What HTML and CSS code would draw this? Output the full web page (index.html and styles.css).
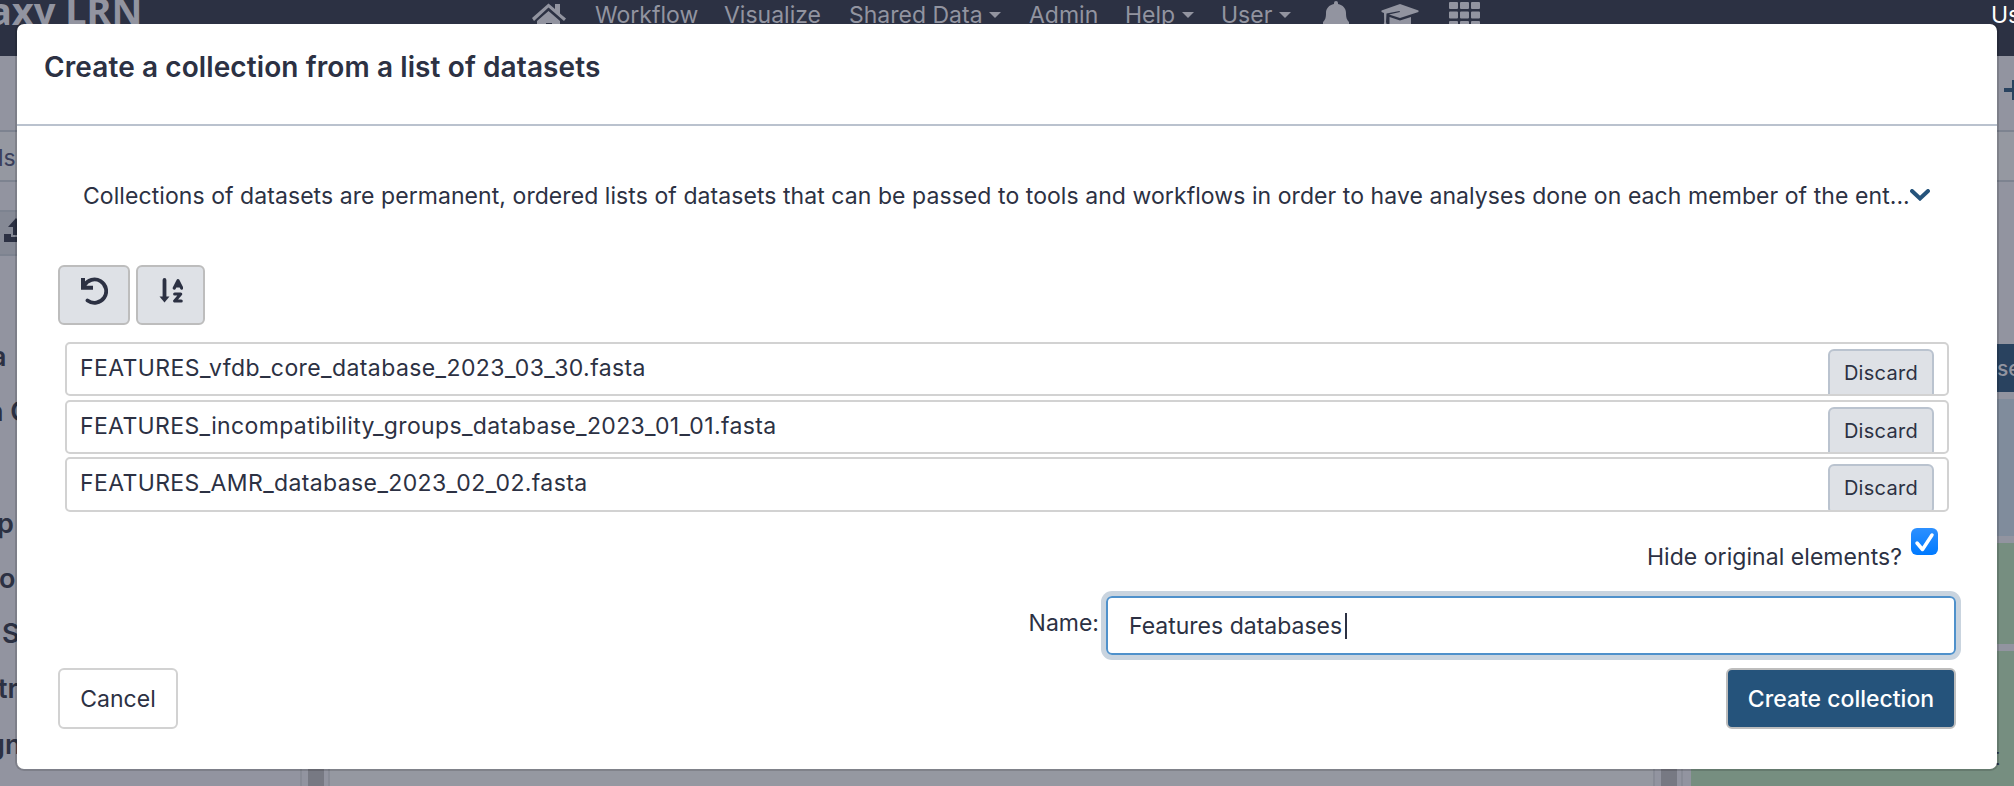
FILE: index.html
```html
<!DOCTYPE html>
<html lang="en">
<head>
<meta charset="utf-8">
<title>Create a collection</title>
<link rel="stylesheet" href="styles.css">
</head>
<body>
<div class="page">
  <nav class="masthead">
    <span class="brand">axy LRN</span>
    <div class="menu">
      <svg class="i-home" viewBox="0 0 36 30"><path d="M1 16 17.500 1.500 24 7V2h5v9.500l6 5-2 2.500L17.500 5.500 3 19z"/><path d="M6 19 17.500 9 29 19v10h-8v-8h-6v8H6z"/></svg>
      <span class="m-work">Workflow</span>
      <span class="m-vis">Visualize</span>
      <span class="m-shared">Shared Data <i class="caret"></i></span>
      <span class="m-admin">Admin</span>
      <span class="m-help">Help <i class="caret"></i></span>
      <span class="m-user">User <i class="caret"></i></span>
      <svg class="i-bell" viewBox="0 0 28 30"><path d="M14 0a2 2 0 0 1 2 2v1c5 1 8 4.500 8 9 0 5 1 7 3 9v3H1v-3c2-2 3-4 3-9 0-4.500 3-8 8-9V2a2 2 0 0 1 2-2z"/></svg>
      <svg class="i-cap" viewBox="0 0 38 26"><path d="M19 0 37.500 6.500v1.500L19 14 8 10.500 19 8 18.500 7 5.500 9.500 5 18l1.500 6H2l1.200-6L3 9 .5 8V6.500z"/><path d="M8.500 13 19 16.500 30 13v9H8.500z"/></svg>
      <svg class="i-grid" viewBox="0 0 31 27"><path d="M1 1h7v5H1zM12 1h7v5h-7zM23 1h7v5h-7zM1 10.500h7v5H1zM12 10.500h7v5h-7zM23 10.500h7v5h-7zM1 20h7v5H1zM12 20h7v5h-7zM23 20h7v5h-7z" stroke-width="2" stroke="currentColor" stroke-linejoin="round"/></svg>
    </div>
    <span class="using">Us</span>
  </nav>
  <div class="columns">
    <aside class="left">
      <div class="l-top"></div>
      <div class="l-search">ls</div>
      <div class="l-gap"></div>
      <div class="l-upload"><svg viewBox="0 0 24 24"><path d="M12 0 20 9H15v8H9V9H4zM0 16h7v3h10v-3h7v8H0z"/></svg></div>
      <ul class="sections">
        <li class="s1">a</li><li class="s2">n C</li><li class="s3">p</li><li class="s4">o</li><li class="s5">S</li><li class="s6">tra</li><li class="s7">gn</li>
      </ul>
    </aside>
    <div class="splitter"><i></i></div>
    <main class="center"></main>
    <div class="splitter"><i></i></div>
    <aside class="right">
      <div class="r-top"><svg viewBox="0 0 20 20"><path d="M8 0h4v8h8v4h-8v8H8v-8H0V8h8z"/></svg></div>
      <div class="r-search"></div>
      <div class="r-gap"></div>
      <div class="r-button">se</div>
      <div class="r-item blue"></div>
      <div class="r-item green"></div>
      <div class="r-item last"><span>t</span></div>
    </aside>
  </div>
</div>
<section class="modal">
  <header class="modal-head"><h1>Create a collection from a list of datasets</h1></header>
  <div class="modal-body">
    <div class="help"><p>Collections of datasets are permanent, ordered lists of datasets that can be passed to tools and workflows in order to have analyses done on each member of the ent...</p>
      <svg viewBox="0 0 20 12"><path d="M2 2 10 9.500 18 2"/></svg></div>
    <div class="tools">
      <button class="reset"><svg viewBox="0 0 28 28"><path class="fill" d="M1 1h4v7.500l2 .2h6v4H1z"/><path class="line" d="M4.200 8.500A11.700 11.700 0 1 1 7.500 23.500"/></svg></button>
      <button class="sort"><svg viewBox="0 0 24 26"><path class="shaft" d="M5.500 2v18"/><path class="fill" d="M.5 18.500h10l-5 6z"/><path class="az" d="M15.300 10 19 2.700 22.700 10M16.500 8h5M15.700 16h6l-6 7h6.500"/></svg></button>
    </div>
    <ul class="list">
      <li><span class="n1">FEATURES_vfdb_core_database_2023_03_30.fasta</span><button>Discard</button></li>
      <li><span class="n2">FEATURES_incompatibility_groups_database_2023_01_01.fasta</span><button>Discard</button></li>
      <li><span class="n3">FEATURES_AMR_database_2023_02_02.fasta</span><button>Discard</button></li>
    </ul>
    <div class="hide"><span>Hide original elements?</span><i class="check"><svg viewBox="0 0 27 27"><path d="M6 15 11.500 21.500 21 7"/></svg></i></div>
    <div class="name"><span>Name:</span><div class="field"><span>Features databases</span><i class="cursor"></i></div></div>
    <footer class="actions"><button class="cancel">Cancel</button><button class="create">Create collection</button></footer>
  </div>
</section>
</body>
</html>
```

FILE: styles.css
```css
* { box-sizing: border-box; }
body { margin: 0; width: 2014px; height: 786px; overflow: hidden; font-family: Inter, "Liberation Sans", sans-serif; font-size: 23px; color: #2c3143; }
ul, p, h1 { margin: 0; padding: 0; list-style: none; font-weight: normal; }
span, p, h1, li { white-space: nowrap; }
button { font: inherit; color: inherit; padding: 0; margin: 0; }
svg { display: block; flex: none; }
.page { height: 786px; display: flex; flex-direction: column; background: #9294a0; }
.masthead { height: 56px; flex: none; background: #2c3143; color: #9294a0; fill: #9294a0; display: flex; align-items: flex-start; overflow: hidden; }
.brand { font-family: "Noto Sans", sans-serif; font-weight: 700; font-size: 38px; line-height: 40px; width: 541px; flex: none; margin-top: -10px; margin-left: -11px; }
.menu { display: flex; line-height: 30px; width: 1461px; flex: none; }
.menu span { flex: none; }
.caret { display: inline-block; border: 6px solid transparent; border-top-color: currentColor; border-bottom: 0; vertical-align: 5px; }
.i-home { width: 36px; height: 30px; margin: 2px 28px 0 1px; }
.m-work { width: 129px; } .m-vis { width: 125px; } .m-shared { width: 180px; } .m-admin { width: 96px; } .m-help { width: 96px; } .m-user { width: 101px; }
.i-bell { width: 28px; height: 30px; margin: 1px 31px 0 0; }
.i-cap { width: 38px; height: 26px; margin: 4px 30px 0 0; }
.i-grid { width: 31px; height: 27px; margin-top: 2px; }
.using { color: #fff; line-height: 30px; flex: none; }
.columns { flex: 1; display: flex; min-height: 0; }
.left { width: 300px; overflow: hidden; }
.l-top { height: 76px; border-bottom: 2px solid #7d8390; }
.l-search { height: 50px; background: #9598a1; border-bottom: 2px solid #7d8390; line-height: 53px; text-indent: -2px; color: #3a3f5c; }
.l-gap { height: 28px; }
.l-upload { height: 46px; background: #858995; border: solid #7d8390; border-width: 2px 0; padding: 6px 0 0 4px; }
.l-upload svg { width: 24px; height: 24px; fill: #2c3143; }
.sections { font-weight: 600; font-size: 27px; line-height: 34px; padding-top: 84px; }
.sections li { height: 55px; }
.s1 { margin-left: -9px; } .s2 { margin-left: -13px; } .sections .s2 { height: 112px; } .s3 { margin-left: -3px; } .s4 { margin-left: -1px; } .s5 { margin-left: 2px; } .sections .s6 { margin-left: -2px; height: 56px; } .s7 { margin-left: -12px; }
.splitter { width: 30px; border: solid #888b96; border-width: 0 2px; padding-left: 6px; }
.splitter i { display: block; width: 16px; height: 100%; background: #777983; }
.center { width: 1323px; background: #9598a1; }
.right { width: 331px; padding-left: 8px; }
.r-top { height: 76px; border-bottom: 2px solid #7d8390; padding: 24px 0 0 313px; }
.r-top svg { width: 20px; height: 20px; fill: #29425f; }
.r-search { height: 50px; background: #9598a1; border-bottom: 2px solid #7d8390; }
.r-gap { height: 162px; }
.r-button { height: 48px; margin-bottom: 7px; background: #29425f; color: #9294a0; font-weight: 500; font-size: 21px; line-height: 50px; padding-left: 306px; overflow: hidden; }
.r-item { background: #768e80; margin-bottom: 7px; height: 101px; }
.r-item.blue { height: 137px; background: #808c9c; }
.r-item.last { height: 135px; margin: 0; padding: 92px 0 0 301px; }
.modal { position: absolute; left: 17px; top: 24px; width: 1980px; height: 745px; border-radius: 7px; background: #fff; box-shadow: 0 0 0 2px rgba(0,0,0,.14); clip-path: inset(0 -3px -3px -3px); display: flex; flex-direction: column; }
.modal-head { height: 102px; border-bottom: 2px solid #bac2ce; padding: 24px 27px; }
.modal-head h1 { font-size: 28px; font-weight: 600; line-height: 38px; letter-spacing: .1px; }
.modal-body { display: flex; flex-direction: column; padding: 0 41px; }
.help { display: flex; margin: 53px 0 0 25px; line-height: 34px; }
.help p { width: 1827px; letter-spacing: .065px; }
.help svg { width: 20px; height: 12px; margin-top: 10px; fill: none; stroke: #25537b; stroke-width: 4; stroke-linecap: round; }
.tools { display: flex; gap: 6px; margin-top: 52px; }
.tools button { height: 60px; border: 2px solid #bdbdbd; border-radius: 6px; background: #dee1e6; display: flex; justify-content: center; padding-top: 10px; }
.tools .reset { width: 72px; } .tools .sort { width: 69px; padding-top: 11px; }
.reset svg { width: 28px; height: 28px; } .sort svg { width: 24px; height: 26px; }
.fill { fill: #2c3143; }
.line, .shaft, .az { fill: none; stroke: #2c3143; stroke-width: 3.800; stroke-linecap: round; stroke-linejoin: round; }
.az { stroke-width: 3.200; }
.list { display: flex; flex-direction: column; gap: 4px; margin: 17px 7px 0; }
.list li { height: 54px; border: 2px solid #d2d2d2; border-radius: 5px; display: flex; justify-content: space-between; padding: 0 13px; line-height: 49px; overflow: hidden; }
.list li:last-child { height: 55px; margin-top: -1px; }
.n1 { letter-spacing: .41px; } .n2 { letter-spacing: .36px; } .n3 { letter-spacing: .38px; }
.list button { width: 106px; height: 50px; margin-top: 5px; border: 2px solid #bac3cf; border-radius: 6px; background: #dee1e6; font-size: 20px; line-height: 42px; letter-spacing: .3px; padding-bottom: 3px; }
.hide { display: flex; justify-content: flex-end; margin: 16px 18px 0 0; gap: 9px; line-height: 58px; height: 68px; letter-spacing: .05px; }
.check { width: 27px; height: 27px; border-radius: 6px; background: linear-gradient(#2d90ff, #007aff); }
.check svg { width: 27px; height: 27px; fill: none; stroke: #fff; stroke-width: 3.500; stroke-linecap: round; stroke-linejoin: round; }
.name { display: flex; justify-content: flex-end; gap: 7px; line-height: 54px; }
.field { width: 850px; height: 59px; border: 2px solid #4f91cb; border-radius: 6px; box-shadow: 0 0 0 5px #c9d4df; padding-left: 21px; display: flex; align-items: center; }
.cursor { width: 2px; height: 26px; background: #2c3143; margin-left: 3px; }
.actions { display: flex; justify-content: space-between; margin-top: 13px; }
.actions button { height: 61px; border: 2px solid #d2d2d2; border-radius: 6px; background: #fff; }
.actions .cancel { width: 120px; }
.actions .create { width: 230px; border-color: #bdbdbd; background: #25537b; color: #fff; font-weight: 500; }
```
